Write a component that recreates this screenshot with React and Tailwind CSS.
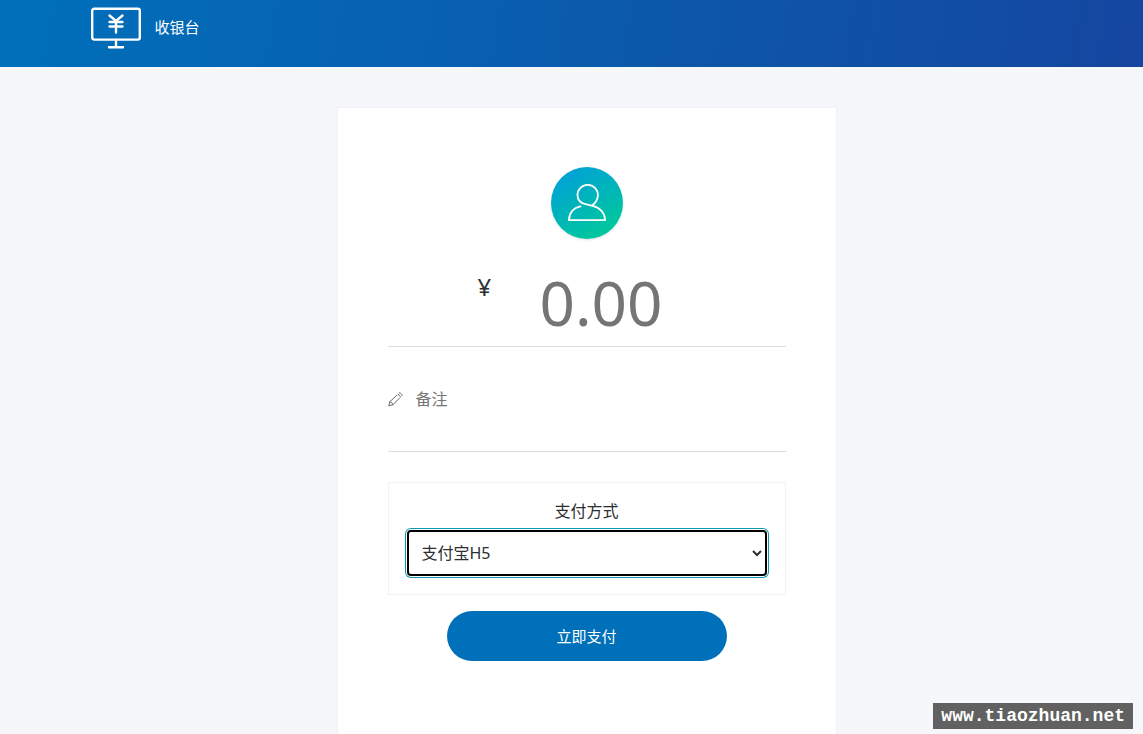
import React, { useState } from 'react';

const MonitorIcon = () => (
  <svg width="50" height="42" viewBox="0 0 50 42" fill="none" stroke="#fff" strokeWidth="2.4" strokeLinecap="round" aria-hidden="true">
    <rect x="1.2" y="1.8" width="47.6" height="30.800" rx="2" />
    <path d="M25 33v7M18 40.200h14" />
    <path d="M18.500 8.500l6.500 5.500L31.500 8.500M25 14V25.500M18.500 15h13M18.500 19.500h13" strokeWidth="2.4" />
  </svg>
);

const Avatar = () => (
  <div className="flex h-18 w-18 items-center justify-center rounded-full bg-linear-[150deg] from-[#009cde] to-[#00cf92] shadow-sm">
    <svg width="38" height="38" viewBox="0 0 38 38" fill="none" stroke="#fff" strokeWidth="1.8" strokeLinecap="round" strokeLinejoin="round" aria-hidden="true">
      <path d="M24.500 21.800C32 23.500 37 29 37 36.200H1C1 29 5.500 23.500 12.500 22.300" />
      <path d="M24.500 21.800c-2.500-1-4.500-.9-7-1.600C12.500 19 9.500 15.500 9.500 11a10.200 10.200 0 0 1 20.400 0c0 4-2 7.500-5.400 10.200" />
    </svg>
  </div>
);

const PencilIcon = () => (
  <svg width="15" height="15" viewBox="0 0 15 15" fill="none" stroke="#666" strokeLinecap="round" strokeLinejoin="round" aria-hidden="true">
    <path d="M8.800 3.200L1.800 9.800L.8 13.800L4.800 12.800L11.600 6" />
    <path d="M1.800 9.800c1.600.2 2.700 1.200 3 3M10 2.200l2.800 2.800M11.400.8c1.400.2 2.600 1.400 2.800 2.800" />
  </svg>
);

const App = () => {
  const [amount, setAmount] = useState('');
  const [remark, setRemark] = useState('');
  const [method, setMethod] = useState('alipay');

  return (
    <div className="relative flex min-h-screen flex-col bg-[#f5f7fb] font-['Noto_Sans','Noto_Sans_CJK_SC',sans-serif] text-base text-[#2c2e2f]">
      <header className="flex h-[67px] items-start gap-[13px] bg-linear-[100deg] from-[#0070ba] to-[#1546a0] px-[8%] pt-[7px] text-[15px] text-white">
        <MonitorIcon />
        <span className="leading-10">收银台</span>
      </header>

      <main className="flex flex-1 flex-col items-center pt-10 pl-[30px]">
        <form
          className="flex w-full max-w-[500px] flex-1 flex-col items-center border border-b-0 border-[#eff1f4] bg-white px-[50px] pt-[59px]"
          onSubmit={(e) => e.preventDefault()}
        >
          <Avatar />

          <div className="mt-8 flex w-full items-start border-b border-[#dcdcdc] pb-3">
            <label htmlFor="amount" className="w-[152px] pl-[90px] text-2xl">¥</label>
            <input
              id="amount"
              inputMode="decimal"
              placeholder="0.00"
              value={amount}
              onChange={(e) => setAmount(e.target.value)}
              className="h-[63px] min-w-0 flex-1 bg-transparent text-[62px] leading-[63px] outline-none placeholder:text-[#757575]"
            />
          </div>

          <div className="flex w-full items-center gap-[13px] border-b border-[#dcdcdc] pt-8 pb-8">
            <label htmlFor="remark" aria-label="备注"><PencilIcon /></label>
            <input
              id="remark"
              placeholder="备注"
              value={remark}
              onChange={(e) => setRemark(e.target.value)}
              className="h-10 min-w-0 flex-1 bg-transparent outline-none placeholder:text-[#757575]"
            />
          </div>

          <div className="mt-[30px] flex w-full flex-col items-center border border-[#f2f2f2] px-[18px] pt-4 pb-[18px]">
            <label htmlFor="method" className="text-base">支付方式</label>
            <select
              id="method"
              value={method}
              onChange={(e) => setMethod(e.target.value)}
              className="mt-[7px] h-[46px] w-full rounded-sm border-2 border-black bg-white pl-[9px] ring-1 ring-[#0d97b5] ring-offset-1 outline-none"
            >
              <option value="alipay">支付宝H5</option>
            </select>
          </div>

          <button type="submit" className="mt-4 h-[50px] w-[280px] cursor-pointer rounded-full bg-[#0070ba] text-[15px] text-white">
            立即支付
          </button>
        </form>
      </main>

      <div className="absolute right-[10px] bottom-[5px] bg-[#616161] px-2 font-['Liberation_Mono',monospace] text-lg leading-[26px] font-bold text-white">
        www.tiaozhuan.net
      </div>
    </div>
  );
};

export default App;
